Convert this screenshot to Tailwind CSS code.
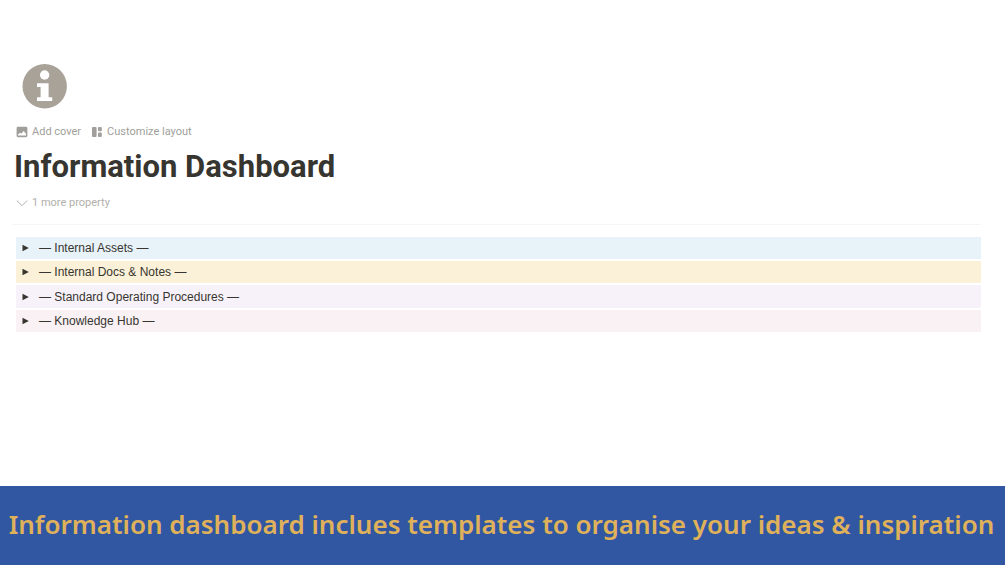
<!DOCTYPE html>
<html lang="en">
<head>
<meta charset="utf-8">
<meta name="viewport" content="width=device-width, initial-scale=1">
<title>Information Dashboard</title>
<script src="https://cdn.jsdelivr.net/npm/@tailwindcss/browser@4"></script>
</head>
<body class="flex min-h-screen flex-col bg-white font-[Roboto,sans-serif] text-[#37352f]">
<main class="flex-1 pt-16 pr-6 pl-4">
  <svg class="ml-1.5 size-12" viewBox="0 0 48 48" aria-hidden="true">
    <circle cx="22.7" cy="22.2" r="22.2" fill="#a8a299"/>
    <circle cx="22.6" cy="11" r="4.7" fill="#fff"/>
    <path d="M15 19.2H26.6V33.2H30.2V36.9H15V33.2H18.6V22.9H15Z" fill="#fff"/>
  </svg>
  <div class="mt-3 flex h-4 items-center gap-2.5 text-[11px] leading-4 text-[#a09f9b]">
    <button type="button" class="flex items-center gap-1">
      <svg class="size-3" viewBox="0 0 12 12" aria-hidden="true"><path fill="#a09f9b" fill-rule="evenodd" d="M2 .8H10A1.4 1.4 0 0 1 11.4 2.200V9.800A1.400 1.400 0 0 1 10 11.200H2A1.400 1.400 0 0 1 .6 9.800V2.200A1.400 1.400 0 0 1 2 .8ZM2 9.500H10V7.800L7.600 5L5.200 7.800L4 6.700L2 8.500Z"/></svg>
      <span>Add cover</span>
    </button>
    <button type="button" class="flex items-center gap-1">
      <svg class="size-3" viewBox="0 0 12 12" fill="#a09f9b" aria-hidden="true"><rect x="1" y="1" width="4.600" height="10" rx="1"/><rect x="7" y="1" width="3.800" height="4.200" rx="1"/><rect x="7" y="6.600" width="3.800" height="4.400" rx="1"/></svg>
      <span>Customize layout</span>
    </button>
  </div>
  <h1 class="-ml-0.5 mt-2 text-[31px] leading-[38px] font-bold">Information Dashboard</h1>
  <button type="button" class="mt-[5px] flex h-6 items-center gap-1 text-[11px] leading-4 text-[#b1b0ac]">
    <svg class="size-3" viewBox="0 0 12 12" fill="none" stroke="#b1b0ac" aria-hidden="true"><path d="M.8 3.500L6 8.700L11.200 3.500"/></svg>
    <span>1 more property</span>
  </button>
  <hr class="-ml-1 mt-[9px] border-[#f5f5f4]">
  <div class="mt-3 grid gap-0.5 font-['Liberation_Sans',sans-serif] text-xs">
    <details class="bg-[#e7f2f9]"><summary class="flex h-[22px] cursor-pointer list-none items-center gap-2.5 pl-1.5"><svg class="h-2 w-[7px]" viewBox="0 0 7 8" aria-hidden="true"><path d="M.5 .8L6.800 4L.5 7.200Z" fill="#37352f"/></svg>— Internal Assets —</summary></details>
    <details class="bg-[#fbf1d8]"><summary class="flex h-[22px] cursor-pointer list-none items-center gap-2.5 pl-1.5"><svg class="h-2 w-[7px]" viewBox="0 0 7 8" aria-hidden="true"><path d="M.5 .8L6.800 4L.5 7.200Z" fill="#37352f"/></svg>— Internal Docs &amp; Notes —</summary></details>
    <details class="bg-[#f7f2f9]"><summary class="flex h-[23px] cursor-pointer list-none items-center gap-2.5 pl-1.5"><svg class="h-2 w-[7px]" viewBox="0 0 7 8" aria-hidden="true"><path d="M.5 .8L6.800 4L.5 7.200Z" fill="#37352f"/></svg>— Standard Operating Procedures —</summary></details>
    <details class="bg-[#faf1f4]"><summary class="flex h-[22px] cursor-pointer list-none items-center gap-2.5 pl-1.5"><svg class="h-2 w-[7px]" viewBox="0 0 7 8" aria-hidden="true"><path d="M.5 .8L6.800 4L.5 7.200Z" fill="#37352f"/></svg>— Knowledge Hub —</summary></details>
  </div>
</main>
<footer class="flex min-h-[79px] items-center justify-center bg-[#3257a2] pr-0.5 pb-1">
  <p class="text-center font-['Noto_Sans',sans-serif] text-[26px] leading-9 font-semibold text-[#dfb15b]">Information dashboard inclues templates to organise your ideas &amp; inspiration</p>
</footer>
</body>
</html>
